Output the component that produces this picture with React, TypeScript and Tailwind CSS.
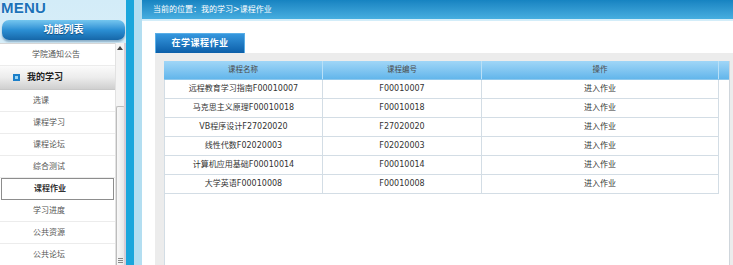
import React from "react";

const rows: [string, string][] = [
  ["远程教育学习指南F00010007", "F00010007"],
  ["马克思主义原理F00010018", "F00010018"],
  ["VB程序设计F27020020", "F27020020"],
  ["线性代数F02020003", "F02020003"],
  ["计算机应用基础F00010014", "F00010014"],
  ["大学英语F00010008", "F00010008"],
];

const subItems = ["选课", "课程学习", "课程论坛", "综合测试", "课程作业", "学习进度", "公共资源", "公共论坛"];

export default function App() {
  return (
    <div className="w-[733px] h-[265px] overflow-hidden flex bg-white font-['DejaVu_Sans','Noto_Sans_CJK_SC',sans-serif]">
      {/* Sidebar */}
      <div className="w-[126px] shrink-0 flex flex-col bg-gradient-to-b from-[#d3ecf8] to-[#eef8fd]">
        <div className="h-[19px] overflow-hidden pl-[1px]">
          <div className="mt-[0px] text-[15px] leading-none font-bold tracking-[0.2px] text-[#1c72b8] font-['Liberation_Sans',sans-serif] [text-shadow:0_0_2px_#ffffff]">
            MENU
          </div>
        </div>
        <div className="ml-[2px] mt-[1px] w-[123px] h-[20px] rounded-[7px] bg-gradient-to-b from-[#74c6ef] via-[#2b8fd4] to-[#1667a8] shadow-[0_2px_2px_rgba(0,60,110,0.35)] flex items-center justify-center">
          <span className="text-[10px] leading-none font-bold text-white [text-shadow:0_1px_1px_#0b4a80]">功能列表</span>
        </div>
        <div className="mt-[3px] flex-1 flex min-h-0">
          <div className="w-[115px] bg-white border-t border-[#d6d6d6] flex flex-col">
            <div className="h-[22px] shrink-0 flex items-center pl-[32px] text-[8px] leading-none text-[#555] border-b border-[#ececec]">学院通知公告</div>
            <div className="h-[24px] shrink-0 flex items-center pl-[13px] bg-gradient-to-b from-[#fbfbfb] via-[#ececec] to-[#cfcfcf] border-b border-[#c8c8c8]">
              <span className="w-[7px] h-[7px] bg-[#1c7fc9] flex items-center justify-center">
                <span className="w-[3px] h-[3px] bg-[#9ad6f6]" />
              </span>
              <span className="ml-[7px] text-[9px] leading-none font-bold text-[#222]">我的学习</span>
            </div>
            {subItems.map((s) =>
              s === "课程作业" ? (
                <div key={s} className="h-[22px] shrink-0 flex items-center pl-[32px] text-[8px] leading-none font-bold text-[#333] border border-[#8d8d8d] ml-[1px] mr-[1px] bg-white">
                  {s}
                </div>
              ) : (
                <div key={s} className="h-[22px] shrink-0 flex items-center pl-[33px] text-[8px] leading-none text-[#555] border-b border-[#ececec]">
                  {s}
                </div>
              )
            )}
          </div>
          <div className="w-[9px] bg-[#f4f4f4] border-l border-[#e2e2e2] flex flex-col items-center">
            <svg width="6" height="4" viewBox="0 0 6 4" className="mt-[3px]">
              <path d="M0 4 L3 0 L6 4 Z" fill="#444" />
            </svg>
            <div className="mt-[56px] w-[9px] flex-1 border-t border-l border-[#bdbdbd] bg-gradient-to-r from-[#f8f8f8] to-[#e6e6e6] rounded-t-[2px] flex flex-col items-center justify-end pb-[2px]">
              <div className="w-[5px] h-[5px] flex flex-col justify-between">
                <div className="h-[1px] bg-[#888]" />
                <div className="h-[1px] bg-[#888]" />
                <div className="h-[1px] bg-[#888]" />
              </div>
            </div>
          </div>
          <div className="w-[2px] bg-[#d7cdd6]" />
        </div>
      </div>

      {/* Stripes */}
      <div className="w-[8px] shrink-0 bg-[#1aa6dc]" />
      <div className="w-[8px] shrink-0 bg-[#b3def1]" />

      {/* Main */}
      <div className="flex-1 flex flex-col min-w-0">
        <div className="h-[19px] shrink-0 bg-gradient-to-b from-[#1683c1] to-[#46aee0] flex items-center pl-[11px]">
          <span className="text-[8px] leading-none text-white">当前的位置：我的学习&gt;课程作业</span>
        </div>
        <div className="h-[2px] shrink-0 bg-[#d3edf9]" />
        <div className="flex-1 flex flex-col pl-[13px] pt-[12px] min-h-0">
          <div className="w-[90px] h-[20px] shrink-0 bg-gradient-to-b from-[#3597de] to-[#0b5fa9] border-t border-l border-r border-[#5aaee6] flex items-center justify-center">
            <span className="text-[9px] leading-none font-bold text-white tracking-[0.5px]">在学课程作业</span>
          </div>
          <div className="flex-1 bg-[#ececec] pl-[9px] pt-[8px] pr-[3px] flex min-h-0">
            <div className="flex-1 bg-white border-r border-[#cfd6dc] flex flex-col">
              <div className="h-[19px] shrink-0 flex bg-gradient-to-b from-[#a0d6f7] to-[#62b6eb] border-b border-[#8fc8ec]">
                <div className="w-[159px] flex items-center justify-center border-r border-[#b9e0f7] text-[7.5px] leading-none text-[#4a4a4a]">课程名称</div>
                <div className="w-[159px] flex items-center justify-center border-r border-[#b9e0f7] text-[7.5px] leading-none text-[#4a4a4a]">课程编号</div>
                <div className="w-[237px] flex items-center justify-center border-r border-[#b9e0f7] text-[7.5px] leading-none text-[#4a4a4a]">操作</div>
                <div className="flex-1" />
              </div>
              {rows.map(([name, code]) => (
                <div key={code} className="h-[19px] shrink-0 flex w-[555px] border-b border-l border-[#d3dde5]">
                  <div className="w-[158px] flex items-center justify-center border-r border-[#d3dde5] text-[8px] leading-none text-[#333]">{name}</div>
                  <div className="w-[159px] flex items-center justify-center border-r border-[#d3dde5] text-[8px] leading-none text-[#333]">{code}</div>
                  <div className="w-[237px] flex items-center justify-center border-r border-[#d3dde5] text-[8px] leading-none text-[#333]">进入作业</div>
                </div>
              ))}
              <div className="flex-1 border-l border-[#d3dde5]" />
            </div>
          </div>
        </div>
      </div>
    </div>
  );
}
